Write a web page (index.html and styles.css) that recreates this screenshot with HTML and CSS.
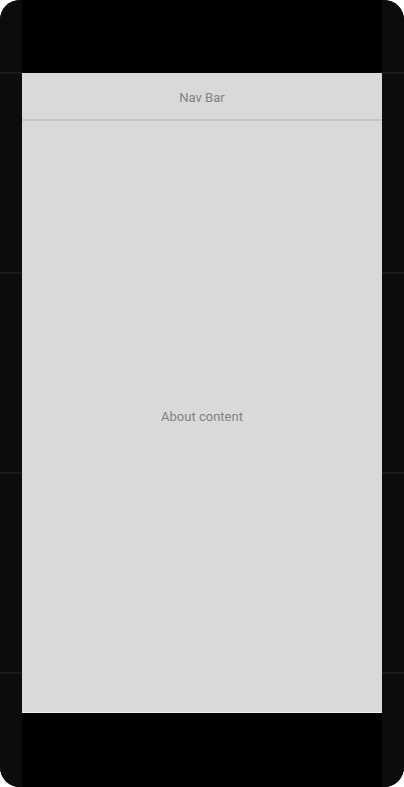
FILE: index.html
```html
<!DOCTYPE html>
<html>
<head>
<meta charset="utf-8">
<link rel="stylesheet" href="styles.css">
</head>
<body>
<div class="device">
  <div class="side"></div>
  <div class="screen">
    <div class="top-gap"></div>
    <div class="panel">
      <div class="nav">Nav Bar</div>
      <div class="content">About content</div>
    </div>
    <div class="bottom-gap"></div>
  </div>
  <div class="side"></div>
</div>
</body>
</html>
```
FILE: styles.css
```css
html, body {
  margin: 0;
  padding: 0;
  background: #ffffff;
}
.device {
  width: 404px;
  height: 787px;
  border-radius: 20px;
  overflow: hidden;
  display: grid;
  grid-template-columns: 22px 1fr 22px;
  background: #000;
}
.side {
  background: repeating-linear-gradient(to bottom, #0c0c0c 0 72px, #1b1b1b 72px 74px, #0c0c0c 74px 200px);
}
.screen {
  display: flex;
  flex-direction: column;
  background: #000;
}
.top-gap {
  height: 73px;
  flex: none;
}
.panel {
  height: 640px;
  flex: none;
  display: flex;
  flex-direction: column;
  background: #d9d9d9;
  font-family: Roboto, "Liberation Sans", sans-serif;
  font-size: 13px;
  color: #80818a;
  box-sizing: border-box;
  border-bottom: 1px solid #f0f0f0;
}
.nav {
  height: 48px;
  flex: none;
  display: flex;
  align-items: center;
  justify-content: center;
  border-bottom: 2px solid #c4c4c4;
  box-sizing: border-box;
  padding-top: 2px;
}
.content {
  flex: 1;
  display: flex;
  align-items: center;
  justify-content: center;
}
.bottom-gap {
  flex: 1;
}
```
